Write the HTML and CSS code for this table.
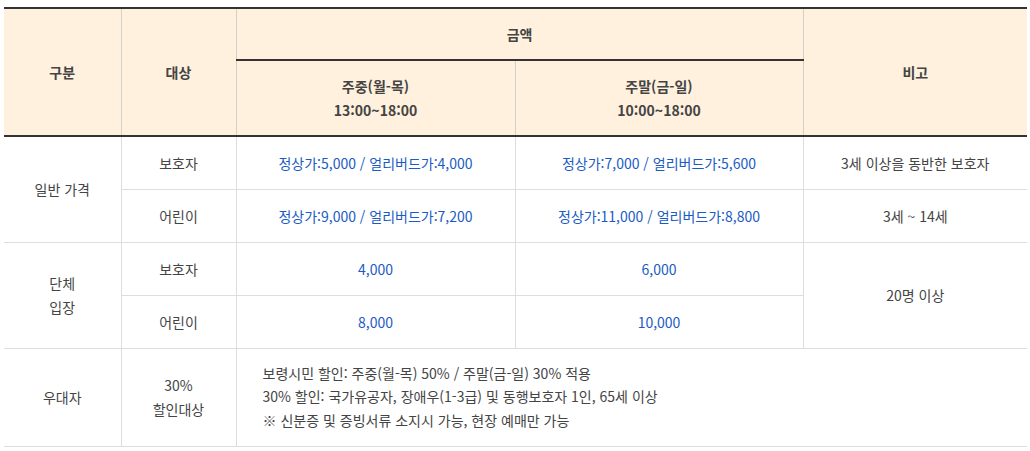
FILE: index.html
```html
<!DOCTYPE html>
<html lang="ko">
<head>
<meta charset="utf-8">
<link rel="stylesheet" href="styles.css">
</head>
<body>
<div class="wrap">
<table class="price">
  <colgroup>
    <col class="c1"><col class="c2"><col class="c3"><col class="c4"><col class="c5">
  </colgroup>
  <thead>
    <tr class="h1">
      <th rowspan="2">구분</th>
      <th rowspan="2">대상</th>
      <th colspan="2" class="amt">금액</th>
      <th rowspan="2">비고</th>
    </tr>
    <tr class="h2">
      <th>주중(월-목)<br>13:00~18:00</th>
      <th>주말(금-일)<br>10:00~18:00</th>
    </tr>
  </thead>
  <tbody>
    <tr class="r">
      <td rowspan="2">일반 가격</td>
      <td>보호자</td>
      <td class="blue">정상가:5,000 / 얼리버드가:4,000</td>
      <td class="blue">정상가:7,000 / 얼리버드가:5,600</td>
      <td>3세 이상을 동반한 보호자</td>
    </tr>
    <tr class="r">
      <td>어린이</td>
      <td class="blue">정상가:9,000 / 얼리버드가:7,200</td>
      <td class="blue">정상가:11,000 / 얼리버드가:8,800</td>
      <td>3세 ~ 14세</td>
    </tr>
    <tr class="r">
      <td rowspan="2">단체<br>입장</td>
      <td>보호자</td>
      <td class="blue">4,000</td>
      <td class="blue">6,000</td>
      <td rowspan="2">20명 이상</td>
    </tr>
    <tr class="r">
      <td>어린이</td>
      <td class="blue">8,000</td>
      <td class="blue">10,000</td>
    </tr>
    <tr class="last">
      <td>우대자</td>
      <td>30%<br>할인대상</td>
      <td colspan="3" class="left">보령시민 할인: 주중(월-목) 50% / 주말(금-일) 30% 적용<br>30% 할인: 국가유공자, 장애우(1-3급) 및 동행보호자 1인, 65세 이상<br>※ 신분증 및 증빙서류 소지시 가능, 현장 예매만 가능</td>
    </tr>
  </tbody>
</table>
</div>
</body>
</html>
```

FILE: styles.css
```css
html, body {
  margin: 0;
  padding: 0;
  background: #fff;
}
.wrap {
  padding: 7px 3px 0 4px;
}
.price {
  width: 1023px;
  border-collapse: collapse;
  table-layout: fixed;
  font-family: "Noto Sans CJK KR", "Noto Sans", sans-serif;
  font-size: 14px;
  line-height: 24px;
  color: #444;
  text-align: center;
}
.c1 { width: 117px; }
.c2 { width: 115px; }
.c3 { width: 279px; }
.c4 { width: 288px; }
.c5 { width: 224px; }
.price th, .price td {
  border: 1px solid #ddd;
  padding: 0;
  vertical-align: middle;
}
.price th:first-child, .price td:first-child { border-left: none; }
.price thead th {
  background: #fff1de;
  font-weight: 700;
  color: #444;
  border-left-color: #d0d0d0;
  border-right-color: #d0d0d0;
}
.price thead tr.h1 th { border-top: 2px solid #333; }
.price thead th.amt { border-bottom: 2px solid #333; }
.price thead tr.h2 th { border-bottom: 2px solid #333; }
.price thead tr.h1 th[rowspan] { border-bottom: 2px solid #333; }
.h1 { height: 52px; }
.h2 { height: 76px; }
.r { height: 53px; }
.last { height: 98px; }
.price td.blue { color: #1a5bc4; }
.price td.left {
  text-align: left;
  padding-left: 26px;
  line-height: 23.5px;
}
.price td:last-child { border-right: none; }
.price th:last-child { border-right: none; }
```
